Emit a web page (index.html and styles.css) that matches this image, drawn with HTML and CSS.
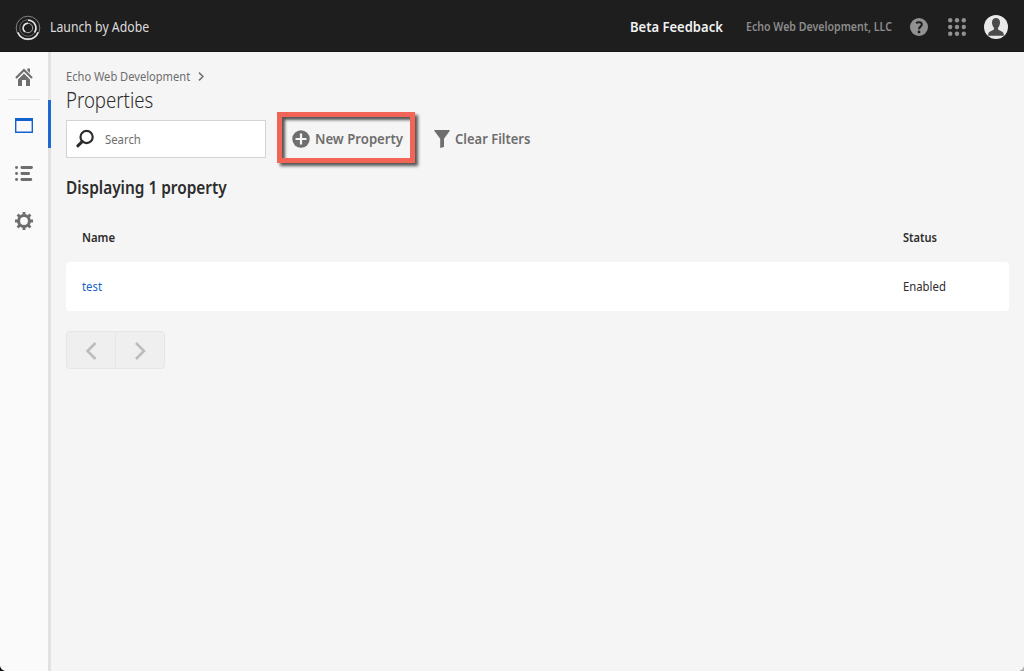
FILE: index.html
```html
<!DOCTYPE html>
<html lang="en">
<head>
<meta charset="utf-8">
<title>Launch by Adobe</title>
<link rel="stylesheet" href="styles.css">
</head>
<body>
<div class="app">
  <header class="topbar">
    <svg class="logo" width="26" height="26" viewBox="0 0 26 26" fill="none">
      <circle cx="13" cy="13" r="11.8" stroke="#8b8b8b" stroke-width=".9"/>
      <circle cx="13" cy="13" r="8.3" stroke="#777" stroke-width=".8"/>
      <circle cx="13" cy="13" r="4.7" stroke="#aaa" stroke-width="1"/>
      <path d="M2.8 17.2A11 11 0 0 0 23.2 17.2" stroke="#e4e4e4" stroke-width="1.6"/>
      <path d="M13 5.2A7.8 7.8 0 0 1 19.4 17.5" stroke="#e4e4e4" stroke-width="1.6"/>
      <path d="M10 16.8A4.8 4.8 0 0 1 13 8.2" stroke="#e4e4e4" stroke-width="1.5"/>
    </svg>
    <span class="brand"><span class="t">Launch by Adobe</span></span>
    <span class="feedback"><span class="t">Beta Feedback</span></span>
    <span class="org"><span class="t">Echo Web Development, LLC</span></span>
    <svg class="help" width="18" height="18" viewBox="0 0 18 18">
      <circle cx="9" cy="9" r="9" fill="#919191"/>
      <path d="M6.1 5.1C7.5 4 11.8 3.5 11.8 6.5C11.8 8.6 9 8.7 9 11.2" fill="none" stroke="#1e1e1e" stroke-width="2"/>
      <circle cx="9" cy="14" r="1.4" fill="#1e1e1e"/>
    </svg>
    <svg class="grid" width="18" height="18" viewBox="0 0 18 18" fill="#919191">
      <circle cx="2.2" cy="2.2" r="2.2"/><circle cx="9" cy="2.2" r="2.2"/><circle cx="15.8" cy="2.2" r="2.2"/>
      <circle cx="2.2" cy="9" r="2.2"/><circle cx="9" cy="9" r="2.2"/><circle cx="15.8" cy="9" r="2.2"/>
      <circle cx="2.2" cy="15.8" r="2.2"/><circle cx="9" cy="15.8" r="2.2"/><circle cx="15.8" cy="15.8" r="2.2"/>
    </svg>
    <svg class="avatar" width="24" height="24" viewBox="0 0 24 24">
      <circle cx="12" cy="12" r="12" fill="#e9e9e9"/>
      <path d="M12 3C9.5 3 8 4.7 8 7.3C8 9.6 8.7 11.5 10 12.7V14.2C9.5 15.5 5 15.7 4.2 19V20.7H19.8V19C19 15.7 14.5 15.5 14 14.2V12.7C15.3 11.5 16 9.6 16 7.3C16 4.7 14.5 3 12 3Z" fill="#4b4b4b"/>
    </svg>
  </header>
  <div class="body">
    <nav class="rail">
      <a class="item home"><svg width="18" height="20" viewBox="0 0 18 20">
        <path d="M1 11L9 3L17 11" fill="none" stroke="#6e6e6e" stroke-width="2.2"/>
        <path d="M12.3 1.5H15V6L12.3 3.5ZM3 12.4L9 6.5L15 12.4V19H11V13H7V19H3Z" fill="#6e6e6e"/>
      </svg></a>
      <a class="item active"><svg width="18" height="15" viewBox="0 0 18 15">
        <path d="M0 0H18V15H0ZM1.4 3V13.6H16.6V3Z" fill="#1363cc" fill-rule="evenodd"/>
      </svg></a>
      <a class="item"><svg width="18" height="15" viewBox="0 0 18 15" stroke="#6e6e6e" stroke-width="2.9" stroke-linecap="round">
        <path d="M1.5 1.5H1.6M6.9 1.5H16.5M1.5 7.5H1.6M6.9 7.5H13.7M1.5 13.5H1.6M6.9 13.5H15.8"/>
      </svg></a>
      <a class="item"><svg width="18" height="18" viewBox="0 0 18 18" fill="none" stroke="#6e6e6e">
        <circle cx="9" cy="9" r="5.4" stroke-width="3"/>
        <path d="M9 0V3M9 15V18M0 9H3M15 9H18M2.6 2.6L4.7 4.7M13.3 13.3L15.4 15.4M2.6 15.4L4.7 13.3M13.3 4.7L15.4 2.6" stroke-width="2.8"/>
      </svg></a>
    </nav>
    <main class="main">
      <div class="crumb"><span class="t">Echo Web Development</span>
        <svg width="6" height="9" viewBox="0 0 6 9" fill="none" stroke="#6e6e6e" stroke-width="1.5"><path d="M1 .6L5 4.5L1 8.4"/></svg>
      </div>
      <h1 class="title"><span class="t">Properties</span></h1>
      <div class="toolbar">
        <div class="search">
          <svg width="20" height="20" viewBox="0 0 20 20" fill="none" stroke="#2c2c2c"><circle cx="11.6" cy="8" r="6.1" stroke-width="2.2"/><path d="M7.2 12.6L2.8 16.8" stroke-width="3" stroke-linecap="round"/></svg>
          <span class="t">Search</span>
        </div>
        <button class="new">
          <svg width="18" height="18" viewBox="0 0 18 18"><circle cx="9" cy="9" r="8.7" fill="#6e6e6e"/><path d="M9 3.5V14.5M3.5 9H14.5" stroke="#f5f5f5" stroke-width="2.2"/></svg>
          <span class="t">New Property</span>
        </button>
        <button class="clear">
          <svg width="16" height="18" viewBox="0 0 16 18"><path d="M.4 0H15.6V1L10 8.7V17L6.2 18V8.7L.4 1Z" fill="#6e6e6e"/></svg>
          <span class="t">Clear Filters</span>
        </button>
      </div>
      <h2 class="count"><span class="t">Displaying 1 property</span></h2>
      <div class="row head"><span class="name"><span class="t">Name</span></span><span class="status"><span class="t">Status</span></span></div>
      <div class="row data"><span class="name"><span class="t">test</span></span><span class="status"><span class="t">Enabled</span></span></div>
      <div class="pager">
        <span class="page"><svg width="12" height="18" viewBox="0 0 12 18"><path d="M10.5 1L2.5 9L10.5 17"/></svg></span>
        <span class="page"><svg width="12" height="18" viewBox="0 0 12 18"><path d="M2 1L10 9L2 17"/></svg></span>
      </div>
    </main>
  </div>
  <svg class="corner left" width="5" height="5" viewBox="0 0 5 5"><path d="M0 0Q1 4 5 5H0Z" fill="#111"/></svg>
  <svg class="corner right" width="5" height="5" viewBox="0 0 5 5"><path d="M5 0Q4 4 0 5H5Z" fill="#aaa"/></svg>
</div>
</body>
</html>
```
FILE: styles.css
```css
* { box-sizing: border-box; }
body { margin: 0; font-family: "Noto Sans", "Open Sans", sans-serif; }
svg { display: block; flex: none; }
/* Labels are condensed horizontally from their left edge. */
.t { display: inline-block; white-space: nowrap; transform: scaleX(var(--narrow, .87)); transform-origin: 0 50%; }
.app { position: relative; width: 1024px; height: 671px; display: flex; flex-direction: column; background: #f5f5f5; overflow: hidden; }
.topbar { height: 52px; flex: none; display: flex; align-items: center; padding: 0 16px 0 15px; background: #1e1e1e; border-bottom: 1px solid #161616; }
.logo { margin-top: 4px; }
.brand { --narrow: .876; margin-left: 9px; width: 580px; padding-top: 2px; font-size: 14px; color: #dcdcdc; }
.feedback { --narrow: .93; width: 116px; padding-top: 1px; font-size: 14px; font-weight: 600; color: #f2f2f2; }
.org { --narrow: .883; width: 164px; padding-top: 1px; font-size: 12px; font-weight: 600; color: #8c8c8c; }
.grid { margin-left: 20px; }
.avatar { margin-left: 18px; }
.help, .grid, .avatar { margin-top: 2px; }
.body { flex: 1; display: flex; }
.rail { width: 51px; flex: none; background: #fafafa; border-right: 3px solid #e1e1e1; }
.item { height: 48px; padding-top: 2px; display: flex; align-items: center; justify-content: center; }
.home { margin: 0 8px; border-bottom: 1px solid #e1e1e1; }
.active { margin-right: -3px; padding-right: 3px; padding-left: 3px; border-right: 3px solid #1c69d4; }
.main { flex: 1; padding: 0 15px; }
.crumb { --narrow: .855; display: flex; align-items: center; gap: 8px; height: 20px; margin-top: 14px; font-size: 13px; color: #6e6e6e; }
.crumb .t { width: 124px; margin-top: -1px; }
.title { --narrow: .885; margin: 0; height: 28px; line-height: 28px; font-size: 21px; font-weight: 300; color: #2c2c2c; }
.toolbar { display: flex; height: 50px; margin-top: -2px; align-items: center; }
.search { width: 200px; height: 38px; margin-top: 3px; display: flex; align-items: center; gap: 10px; padding-left: 8px; background: #fff; border: 1px solid #d3d3d3; font-size: 13px; color: #6e6e6e; }
button { --narrow: .94; font: inherit; color: #6e6e6e; background: none; border: 0; padding: 0; display: flex; align-items: center; font-size: 14px; font-weight: 600; }
.new { width: 138px; height: 51px; margin-left: 11px; padding: 3px 0 0 10px; gap: 4.5px; border: 5px solid #f26456; box-shadow: 3px 3px 3px rgba(0,0,0,.65), inset 3px 3px 3px rgba(0,0,0,.65); }
.clear { --narrow: .927; margin-left: 19px; padding-top: 3px; gap: 4.5px; }
.count { --narrow: .905; margin: 14px 0 0; height: 24px; line-height: 24px; font-size: 17px; font-weight: 600; color: #2c2c2c; }
.row { display: flex; align-items: center; height: 49px; padding: 0 0 2px 16px; font-size: 13px; color: #2c2c2c; }
.name { width: 821px; }
.head { margin-top: 13px; font-weight: 600; }
.head .status { --narrow: .85; }
.data { background: #fff; border-radius: 4px; }
.data .name { color: #2065c7; }
.pager { display: flex; width: 99px; height: 38px; margin-top: 20px; background: #efefef; border: 1px solid #e6e6e6; border-radius: 4px; }
.page { flex: 1; display: flex; align-items: center; justify-content: center; padding-top: 2px; }
.page + .page { border-left: 1px solid #e6e6e6; }
.page path { fill: none; stroke: #bcbcbc; stroke-width: 2.5; }
.corner { position: absolute; bottom: 0; }
.left { left: 0; }
.right { right: 0; }
```
